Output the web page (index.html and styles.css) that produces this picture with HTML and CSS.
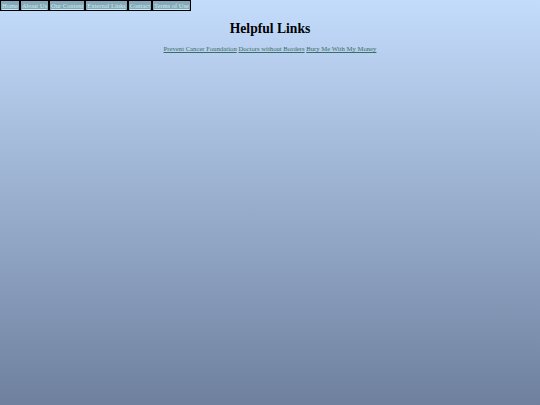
FILE: index.html
```html
<!DOCTYPE html>
<html>
<head>
<meta charset="utf-8">
<link rel="stylesheet" href="styles.css">
</head>
<body>
<nav class="nav">
  <a class="nav-item" href="#">Home</a>
  <a class="nav-item" href="#">About Us</a>
  <a class="nav-item" href="#">Our Content</a>
  <a class="nav-item" href="#">External Links</a>
  <a class="nav-item" href="#">Contact</a>
  <a class="nav-item" href="#">Terms of Use</a>
</nav>
<main class="main">
  <h1 class="title">Helpful Links</h1>
  <p class="links">
    <a href="#">Prevent Cancer Foundation</a>
    <a href="#">Doctors without Borders</a>
    <a href="#">Bury Me With My Money</a>
  </p>
</main>
</body>
</html>
```
FILE: styles.css
```css
html, body {
  margin: 0;
  padding: 0;
  height: 100%;
}
body {
  background: linear-gradient(to bottom, #c4dcfc 0%, #6e809e 100%);
  font-family: "Liberation Serif", "Times New Roman", serif;
  color: #000;
}
.nav {
  display: flex;
  width: fit-content;
  gap: 2px;
  background: #000;
  padding: 1px;
}
.nav-item {
  display: block;
  background: #88a8ba;
  color: #c4eeee;
  font-size: 6.5px;
  line-height: 9px;
  padding: 0 1px;
  text-decoration: underline;
}
.main {
  text-align: center;
}
.title {
  font-size: 13.6px;
  font-weight: bold;
  margin: 10px 0 0;
  line-height: 16px;
}
.links {
  font-size: 6.7px;
  margin: 8px 0 0;
}
.links a {
  color: #3a6e62;
}
```
